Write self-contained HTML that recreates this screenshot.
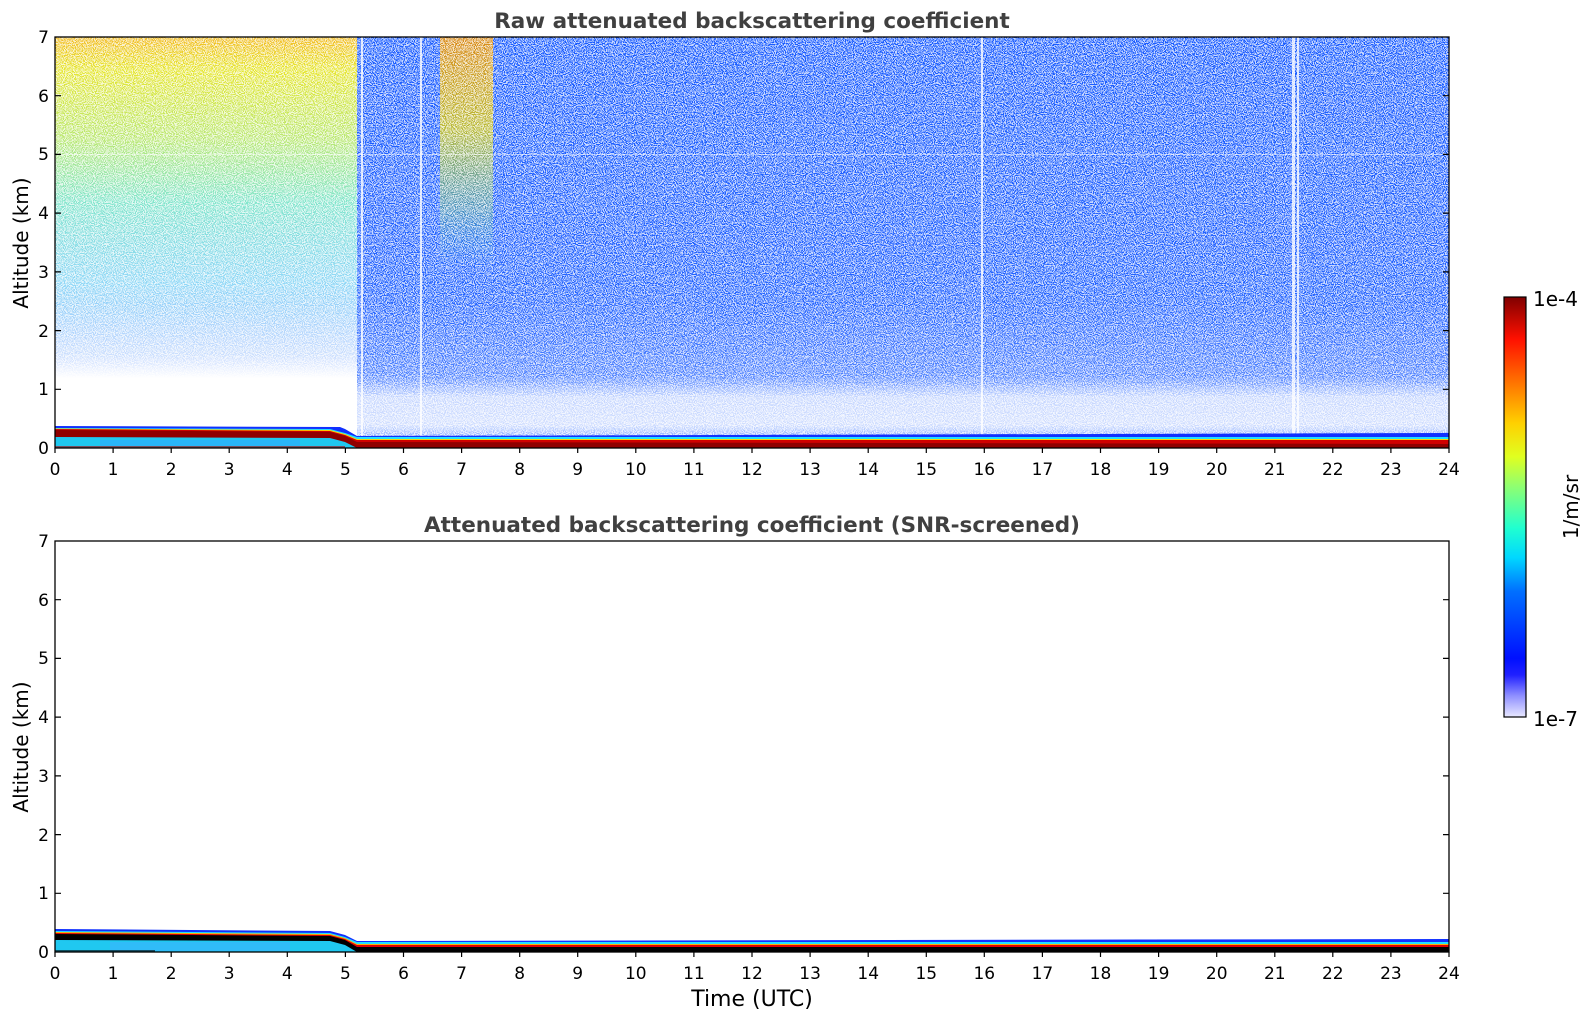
<!DOCTYPE html>
<html><head><meta charset="utf-8"><style>
html,body{margin:0;padding:0;background:#fff;}
svg{display:block;font-family:"DejaVu Sans","Liberation Sans",sans-serif;}
</style></head><body>
<svg width="1595" height="1020" viewBox="0 0 1595 1020" xmlns="http://www.w3.org/2000/svg">
<defs>
<filter id="sp" x="0" y="0" width="100%" height="100%">
<feTurbulence type="fractalNoise" baseFrequency="0.9" numOctaves="1" seed="7"/>
<feColorMatrix type="matrix" values="0 0 0 0 1  0 0 0 0 1  0 0 0 0 1  1 0 0 0 0"/>
<feComponentTransfer><feFuncA type="discrete" tableValues="0 0 0 0 1 1 1 1"/></feComponentTransfer>
</filter>
<linearGradient id="gl" x1="0" y1="0" x2="0" y2="1">
<stop offset="0" stop-color="#f0b000"/>
<stop offset="0.08" stop-color="#e0e000"/>
<stop offset="0.25" stop-color="#a0e040"/>
<stop offset="0.4" stop-color="#40d8b0"/>
<stop offset="0.6" stop-color="#20b0ee"/>
<stop offset="0.8" stop-color="#1060ff"/>
<stop offset="1" stop-color="#2040ff"/>
</linearGradient>
<linearGradient id="wl" x1="0" y1="0" x2="0" y2="1">
<stop offset="0" stop-color="#fff" stop-opacity="0.15"/>
<stop offset="0.4" stop-color="#fff" stop-opacity="0.35"/>
<stop offset="0.65" stop-color="#fff" stop-opacity="0.55"/>
<stop offset="0.78" stop-color="#fff" stop-opacity="0.8"/>
<stop offset="0.83" stop-color="#fff" stop-opacity="1"/>
<stop offset="1" stop-color="#fff" stop-opacity="1"/>
</linearGradient>
<linearGradient id="wr" x1="0" y1="0" x2="0" y2="1">
<stop offset="0" stop-color="#fff" stop-opacity="0"/>
<stop offset="0.66" stop-color="#fff" stop-opacity="0.05"/>
<stop offset="0.85" stop-color="#fff" stop-opacity="0.25"/>
<stop offset="0.9" stop-color="#fff" stop-opacity="0.75"/>
<stop offset="0.97" stop-color="#fff" stop-opacity="0.8"/>
<stop offset="1" stop-color="#fff" stop-opacity="0.5"/>
</linearGradient>
<linearGradient id="go" x1="0" y1="0" x2="0" y2="1">
<stop offset="0" stop-color="#f09000" stop-opacity="0.9"/>
<stop offset="0.4" stop-color="#e0d000" stop-opacity="0.8"/>
<stop offset="0.75" stop-color="#90e060" stop-opacity="0.4"/>
<stop offset="1" stop-color="#40e0c0" stop-opacity="0"/>
</linearGradient>
<linearGradient id="cb" x1="0" y1="1" x2="0" y2="0">
<stop offset="0" stop-color="#e8e8ff"/>
<stop offset="0.05" stop-color="#9090ff"/>
<stop offset="0.1" stop-color="#2020ff"/>
<stop offset="0.14" stop-color="#0010ff"/>
<stop offset="0.3" stop-color="#0070ff"/>
<stop offset="0.38" stop-color="#00d8ff"/>
<stop offset="0.45" stop-color="#20ffd0"/>
<stop offset="0.55" stop-color="#90ff70"/>
<stop offset="0.62" stop-color="#e0ff20"/>
<stop offset="0.7" stop-color="#ffd000"/>
<stop offset="0.8" stop-color="#ff7000"/>
<stop offset="0.9" stop-color="#ff1000"/>
<stop offset="1" stop-color="#800000"/>
</linearGradient>
<clipPath id="c1"><rect x="55" y="37" width="1394" height="411"/></clipPath>
<clipPath id="c2"><rect x="55" y="541" width="1394" height="411"/></clipPath>
</defs>

<!-- TOP PLOT -->
<g clip-path="url(#c1)">
<rect x="55" y="37" width="1394" height="411" fill="#fff"/>
<rect x="55" y="37" width="302" height="411" fill="url(#gl)"/>
<rect x="357" y="37" width="1092" height="400" fill="#1a5cff"/>
<rect x="440" y="37" width="53" height="230" fill="url(#go)"/>
<rect x="55" y="37" width="302" height="411" fill="url(#wl)"/>
<rect x="357" y="37" width="1092" height="400" fill="url(#wr)"/>
<rect x="55" y="37" width="1394" height="400" filter="url(#sp)" opacity="0.75"/>
<g fill="#fff" opacity="0.8">
<rect x="361" y="37" width="2" height="400"/>
<rect x="420" y="37" width="2" height="400"/>
<rect x="981" y="37" width="2" height="400"/>
<rect x="1292" y="37" width="3" height="400"/>
<rect x="1297" y="37" width="2" height="400"/>
</g>
<rect x="55" y="154" width="1394" height="1" fill="#fff" opacity="0.5"/>
<!-- ground band top -->
<path d="M55,426 L340,427 L345,429 L357,436 L1449,433 L1449,448 L55,448 Z" fill="#1030ff"/>
<path d="M55,428 L330,429 L345,433 L357,437 L1449,437 L1449,448 L55,448 Z" fill="#20e0ff"/>
<path d="M55,428.5 L330,430 L345,434 L357,439 L1449,439 L1449,448 L55,448 Z" fill="#ffd000"/>
<path d="M55,429 L330,431 L345,435 L357,440 L1449,440 L1449,448 L55,448 Z" fill="#d00000"/>
<path d="M55,430 L330,432 L345,436 L357,442 L1449,444 L1449,448 L55,448 Z" fill="#900000"/>
<path d="M55,437 L330,438 L345,442 L357,448 L55,448 Z" fill="#20c8f0"/>
<rect x="100" y="440" width="200" height="6" fill="#30a8ff" opacity="0.6"/>
<rect x="55" y="446" width="290" height="2" fill="#b00000" opacity="0.6"/>
</g>
<rect x="55" y="37" width="1394" height="411" fill="none" stroke="#000" stroke-width="1.3"/>

<!-- BOTTOM PLOT -->
<g clip-path="url(#c2)">
<path d="M55,929 L330,931 L345,935 L357,941 L1449,939 L1449,952 L55,952 Z" fill="#1030ff"/>
<path d="M55,931 L330,933 L345,937 L357,942 L1449,942 L1449,952 L55,952 Z" fill="#20e0ff"/>
<path d="M55,932 L330,934 L345,938 L357,944 L1449,944 L1449,952 L55,952 Z" fill="#ffb000"/>
<path d="M55,933 L330,935 L345,939 L357,945 L1449,945 L1449,952 L55,952 Z" fill="#e00000"/>
<path d="M55,934 L330,936 L345,940 L357,947 L1449,947 L1449,952 L55,952 Z" fill="#000"/>
<path d="M55,940 L330,941 L345,945 L357,952 L55,952 Z" fill="#20c8f0"/>
<rect x="110" y="942" width="180" height="9" fill="#40b0ff" opacity="0.5"/>
<rect x="55" y="950" width="100" height="2" fill="#000" opacity="0.6"/>
</g>
<rect x="55" y="541" width="1394" height="411" fill="none" stroke="#000" stroke-width="1.3"/>

<!-- ticks -->
<g stroke="#000" stroke-width="1.2">
<path d="M55,448v5M113.1,448v5M171.2,448v5M229.2,448v5M287.3,448v5M345.4,448v5M403.5,448v5M461.6,448v5M519.7,448v5M577.7,448v5M635.8,448v5M693.9,448v5M752,448v5M810.1,448v5M868.2,448v5M926.3,448v5M984.3,448v5M1042.4,448v5M1100.5,448v5M1158.6,448v5M1216.7,448v5M1274.8,448v5M1332.8,448v5M1390.9,448v5M1449,448v5"/>
<path d="M55,952v5M113.1,952v5M171.2,952v5M229.2,952v5M287.3,952v5M345.4,952v5M403.5,952v5M461.6,952v5M519.7,952v5M577.7,952v5M635.8,952v5M693.9,952v5M752,952v5M810.1,952v5M868.2,952v5M926.3,952v5M984.3,952v5M1042.4,952v5M1100.5,952v5M1158.6,952v5M1216.7,952v5M1274.8,952v5M1332.8,952v5M1390.9,952v5M1449,952v5"/>
<path d="M55,389.3h6M55,330.6h6M55,271.9h6M55,213.1h6M55,154.4h6M55,95.7h6M1449,389.3h-6M1449,330.6h-6M1449,271.9h-6M1449,213.1h-6M1449,154.4h-6M1449,95.7h-6"/>
<path d="M55,893.3h6M55,834.6h6M55,775.9h6M55,717.1h6M55,658.4h6M55,599.7h6M1449,893.3h-6M1449,834.6h-6M1449,775.9h-6M1449,717.1h-6M1449,658.4h-6M1449,599.7h-6"/>
</g>

<g font-size="17" fill="#000" text-anchor="end">
<text x="49" y="454">0</text><text x="49" y="395">1</text><text x="49" y="337">2</text><text x="49" y="278">3</text><text x="49" y="219">4</text><text x="49" y="160">5</text><text x="49" y="102">6</text><text x="49" y="43">7</text>
<text x="49" y="958">0</text><text x="49" y="899">1</text><text x="49" y="841">2</text><text x="49" y="782">3</text><text x="49" y="723">4</text><text x="49" y="664">5</text><text x="49" y="606">6</text><text x="49" y="547">7</text>
</g>
<g font-size="17" fill="#000" text-anchor="middle">
<text x="55" y="475">0</text><text x="113.1" y="475">1</text><text x="171.2" y="475">2</text><text x="229.2" y="475">3</text><text x="287.3" y="475">4</text><text x="345.4" y="475">5</text><text x="403.5" y="475">6</text><text x="461.6" y="475">7</text><text x="519.7" y="475">8</text><text x="577.7" y="475">9</text><text x="635.8" y="475">10</text><text x="693.9" y="475">11</text><text x="752" y="475">12</text><text x="810.1" y="475">13</text><text x="868.2" y="475">14</text><text x="926.3" y="475">15</text><text x="984.3" y="475">16</text><text x="1042.4" y="475">17</text><text x="1100.5" y="475">18</text><text x="1158.6" y="475">19</text><text x="1216.7" y="475">20</text><text x="1274.8" y="475">21</text><text x="1332.8" y="475">22</text><text x="1390.9" y="475">23</text><text x="1449" y="475">24</text>
</g>
<g font-size="17" fill="#000" text-anchor="middle">
<text x="55" y="979">0</text><text x="113.1" y="979">1</text><text x="171.2" y="979">2</text><text x="229.2" y="979">3</text><text x="287.3" y="979">4</text><text x="345.4" y="979">5</text><text x="403.5" y="979">6</text><text x="461.6" y="979">7</text><text x="519.7" y="979">8</text><text x="577.7" y="979">9</text><text x="635.8" y="979">10</text><text x="693.9" y="979">11</text><text x="752" y="979">12</text><text x="810.1" y="979">13</text><text x="868.2" y="979">14</text><text x="926.3" y="979">15</text><text x="984.3" y="979">16</text><text x="1042.4" y="979">17</text><text x="1100.5" y="979">18</text><text x="1158.6" y="979">19</text><text x="1216.7" y="979">20</text><text x="1274.8" y="979">21</text><text x="1332.8" y="979">22</text><text x="1390.9" y="979">23</text><text x="1449" y="979">24</text>
</g>

<text x="752" y="28" font-size="21.5" font-weight="bold" fill="#404040" text-anchor="middle">Raw attenuated backscattering coefficient</text>
<text x="752" y="532" font-size="21.5" font-weight="bold" fill="#404040" text-anchor="middle">Attenuated backscattering coefficient (SNR-screened)</text>
<text x="752" y="1006" font-size="22" fill="#000" text-anchor="middle">Time (UTC)</text>
<text transform="translate(28,243) rotate(-90)" font-size="20" fill="#000" text-anchor="middle">Altitude (km)</text>
<text transform="translate(28,747) rotate(-90)" font-size="20" fill="#000" text-anchor="middle">Altitude (km)</text>

<!-- colorbar -->
<rect x="1504" y="297" width="22" height="420" fill="url(#cb)" stroke="#000" stroke-width="1.2"/>
<text x="1533" y="306" font-size="20" fill="#000">1e-4</text>
<text x="1533" y="726" font-size="20" fill="#000">1e-7</text>
<text transform="translate(1578,507) rotate(-90)" font-size="20" fill="#000" text-anchor="middle">1/m/sr</text>
</svg>
</body></html>
